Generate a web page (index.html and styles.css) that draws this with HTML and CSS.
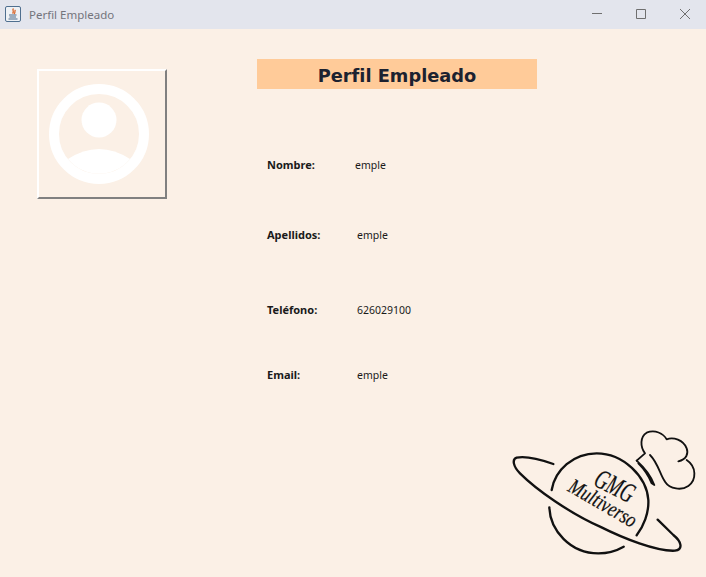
FILE: index.html
```html
<!DOCTYPE html>
<html lang="es">
<head>
    <meta charset="UTF-8">
    <title>Perfil Empleado</title>
    <link rel="stylesheet" href="styles.css">
</head>
<body>
    <header class="titlebar">
        <svg class="java-icon" viewBox="0 0 16 16" width="16" height="16">
            <rect x="0.5" y="0.5" width="15" height="15" rx="1.5" fill="#eef1f5" stroke="#4f6f8f"/>
            <path d="M8.5 2.5C6.5 4.5 10 5 7.5 7.5M10.5 4C9 5.5 11 6 9 8" fill="none" stroke="#d9662a" stroke-width="1.3"/>
            <path d="M4 9h7.5M4.5 11h6.5M3.5 13h9" fill="none" stroke="#4a6a8a" stroke-width="1.1"/>
        </svg>
        <span class="titlebar-text">Perfil Empleado</span>
        <div class="window-btns">
            <svg viewBox="0 0 10 10" width="10" height="10"><path d="M0 4.5h10" class="win-stroke"/></svg>
            <svg viewBox="0 0 10 10" width="10" height="10"><path d="M.5.5h9v9h-9z" class="win-stroke"/></svg>
            <svg viewBox="0 0 10 10" width="10" height="10"><path d="M0 0l10 10M10 0L0 10" class="win-stroke"/></svg>
        </div>
    </header>

    <main class="content">
        <div class="avatar-col">
            <div class="avatar-box">
                <svg viewBox="0 0 126 126" width="126" height="126">
                    <circle cx="60" cy="63" r="45" fill="none" stroke="#fff" stroke-width="10"/>
                    <circle cx="60" cy="49" r="17.5" fill="#fff"/>
                    <path d="M29 88Q60 68 91 88A40 40 0 0 1 29 88Z" fill="#fff"/>
                </svg>
            </div>
        </div>

        <section class="info-col">
            <h1 class="banner">Perfil Empleado</h1>
            <div class="fila fila-nombre"><span class="etiqueta">Nombre:</span><span>emple</span></div>
            <div class="fila fila-apellidos"><span class="etiqueta">Apellidos:</span><span>emple</span></div>
            <div class="fila fila-telefono"><span class="etiqueta">Teléfono:</span><span>626029100</span></div>
            <div class="fila fila-email"><span class="etiqueta">Email:</span><span>emple</span></div>
        </section>

        <div class="logo-col">
            <svg viewBox="0 0 618 471" width="206" height="157">
                <g class="logo-line">
                    <path d="M160 132C120 118 75 108 50 113C35 118 40 140 60 160C110 210 210 280 300 320C370 355 470 395 525 392C550 388 545 365 520 345L473 299"/>
                    <path d="M155 210C165 150 220 100 290 100C370 100 440 170 445 240C447 280 430 320 410 346"/>
                    <path d="M148 262C150 330 210 400 295 400C325 400 350 392 371 380"/>
                </g>
                <g class="logo-hat">
                    <path d="M410 122L435 100C420 80 420 50 440 38C465 28 490 40 500 58C520 50 550 60 560 85C566 100 560 118 535 124"/>
                    <path d="M560 120C590 140 590 180 565 198C545 212 510 208 495 185C480 165 475 130 450 105"/>
                    <path d="M410 122C430 140 452 165 463 195L455 190C445 165 430 145 415 130"/>
                </g>
                <text class="logo-text logo-gmg" transform="translate(332 222) rotate(27) scale(.85 1.3)" text-anchor="middle">GMG</text>
                <text class="logo-text logo-multi" transform="translate(298 268) rotate(30) scale(1 1.25)" text-anchor="middle">Multiverso</text>
            </svg>
        </div>
    </main>
</body>
</html>
```

FILE: styles.css
```css
html, body {
    height: 100%;
}
body {
    margin: 0;
    display: flex;
    flex-direction: column;
    background-color: #fbf0e6;
    font-family: "Noto Sans", sans-serif;
    font-size: 10.5px;
    color: #1a1a1a;
    overflow: hidden;
}

.titlebar {
    height: 29px;
    flex: none;
    display: flex;
    align-items: center;
    padding-left: 5px;
    background-color: #e3e5ed;
}
.java-icon {
    margin: 0 8px 1px 0;
}
.titlebar-text {
    font-size: 11.5px;
    color: #74747c;
}
.window-btns {
    align-self: flex-start;
    margin-left: auto;
    display: flex;
    gap: 34px;
    padding: 9px 16px 0 0;
}
.win-stroke {
    fill: none;
    stroke: #6f6f6f;
    stroke-width: 1;
}

.content {
    flex: 1;
    display: flex;
}
.avatar-col {
    width: 257px;
    flex: none;
    box-sizing: border-box;
    padding: 40px 0 0 37px;
}
.avatar-box {
    width: 126px;
    height: 126px;
    border: 2px solid;
    border-color: #fff #808080 #808080 #fff;
}
.avatar-box svg {
    display: block;
}

.info-col {
    width: 243px;
    flex: none;
    padding-top: 30px;
}
.banner {
    width: 280px;
    margin: 0 0 66px;
    height: 30px;
    line-height: 33px;
    text-align: center;
    background-color: #ffcb99;
    font-family: "DejaVu Sans", sans-serif;
    font-size: 17.8px;
    font-weight: bold;
    color: #1c2230;
}
.fila {
    height: 20px;
    line-height: 20px;
    display: flex;
    padding-left: 10px;
}
.etiqueta {
    width: 90px;
    font-size: 11px;
    font-weight: bold;
}
.fila-nombre .etiqueta {
    width: 88px;
}
.fila-apellidos {
    margin-top: 50px;
}
.fila-telefono {
    margin-top: 55px;
}
.fila-email {
    margin-top: 45px;
}

.logo-col {
    width: 206px;
    flex: none;
    align-self: flex-end;
    line-height: 0;
}
.logo-line path {
    fill: none;
    stroke: #111;
    stroke-width: 7;
    stroke-linecap: round;
}
.logo-hat path {
    fill: none;
    stroke: #111;
    stroke-width: 5.5;
    stroke-linecap: round;
    stroke-linejoin: round;
}
.logo-text {
    font-family: "Liberation Serif", serif;
    font-style: italic;
    fill: #111;
    stroke: #111;
    stroke-width: 0.6;
}
.logo-gmg {
    font-size: 64px;
}
.logo-multi {
    font-size: 52px;
}
```
